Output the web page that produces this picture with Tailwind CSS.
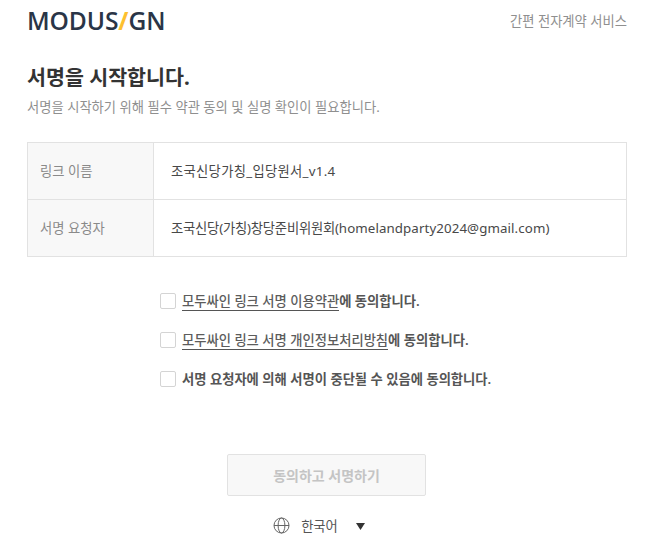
<!DOCTYPE html>
<html lang="ko">
<head>
    <meta charset="UTF-8">
    <title>모두싸인</title>
    <script src="https://cdn.jsdelivr.net/npm/@tailwindcss/browser@4"></script>
</head>
<body class="bg-white h-[535px] overflow-hidden font-['Noto_Sans','Noto_Sans_CJK_KR',sans-serif]">
    <div class="pl-[27px] pr-[38px]">
        <!-- Header -->
        <div class="flex items-center justify-between h-[44px]">
            <div class="text-[24.6px] leading-none font-semibold text-[#2a3547] tracking-[-0.1px] mb-[1px] font-['Open_Sans',sans-serif]">MODUS<span class="text-[#fdc02f] font-bold">/</span>GN</div>
            <div class="text-[13.3px] text-[#8f8f8f]">간편 전자계약 서비스</div>
        </div>

        <!-- Title -->
        <h1 class="mt-[20px] text-[20.6px] leading-[26px] font-bold text-[#333333]">서명을 시작합니다.</h1>
        <p class="mt-[8px] text-[13.3px] leading-[18px] text-[#8f8f8f]">서명을 시작하기 위해 필수 약관 동의 및 실명 확인이 필요합니다.</p>

        <!-- Info table -->
        <div class="mt-[26px] border border-[#e2e2e2] text-[13.3px]">
            <div class="flex h-[57px] border-b border-[#e2e2e2]">
                <div class="w-[126px] bg-[#f8f8f8] border-r border-[#e2e2e2] flex items-center pl-[12px] pt-[1px] text-[#8a8a8a]">링크 이름</div>
                <div class="flex-1 flex items-center pl-[17px] pt-[1px] text-[#484848] tracking-[0.3px]">조국신당가칭_입당원서_v1.4</div>
            </div>
            <div class="flex h-[56px]">
                <div class="w-[126px] bg-[#f8f8f8] border-r border-[#e2e2e2] flex items-center pl-[12px] pt-[1px] text-[#8a8a8a]">서명 요청자</div>
                <div class="flex-1 flex items-center pl-[17px] pt-[1px] text-[#484848]"><span class="tracking-[-0.2px]">조국신당(가칭)창당준비위원회(</span><span class="tracking-[0.1px]">homelandparty2024@gmail.com)</span></div>
            </div>
        </div>

        <!-- Agreements -->
        <div class="mt-[36px] ml-[133px] flex flex-col gap-[23px] text-[13.3px] leading-[16px] font-semibold text-[#555555]">
            <label class="flex items-center gap-[6px]">
                <span class="w-[16px] h-[16px] border border-[#d4d4d4] rounded-[2px] bg-white"></span>
                <span><span class="border-b border-[#555555] font-medium text-[#5c5c5c]">모두싸인 링크 서명 이용약관</span>에 동의합니다.</span>
            </label>
            <label class="flex items-center gap-[6px]">
                <span class="w-[16px] h-[16px] border border-[#d4d4d4] rounded-[2px] bg-white"></span>
                <span><span class="border-b border-[#555555] font-medium text-[#5c5c5c]">모두싸인 링크 서명 개인정보처리방침</span>에 동의합니다.</span>
            </label>
            <label class="flex items-center gap-[6px]">
                <span class="w-[16px] h-[16px] border border-[#d4d4d4] rounded-[2px] bg-white"></span>
                <span>서명 요청자에 의해 서명이 중단될 수 있음에 동의합니다.</span>
            </label>
        </div>

        <!-- Submit -->
        <div class="mt-[67px] flex justify-center">
            <button class="w-[199px] h-[42px] mr-[1px] bg-[#f8f8f8] border border-[#e2e2e2] rounded-[2px] text-[14px] font-bold text-[#c4c4c4]">동의하고 서명하기</button>
        </div>

        <!-- Language -->
        <div class="mt-[18px] pr-[16px] flex justify-center items-center text-[13.3px] text-[#555555] h-[24px]">
            <svg class="w-[17px] h-[17px] mb-[2px]" viewBox="0 0 17 17" fill="none" stroke="#666666" stroke-width="1">
                <circle cx="8.5" cy="8.5" r="7.5"/>
                <ellipse cx="8.5" cy="8.5" rx="3.4" ry="7.5"/>
                <path d="M1 8.5h15"/>
            </svg>
            <span class="ml-[11px] pt-[1px]">한국어</span>
            <svg class="ml-[18px] w-[9px] h-[7px]" viewBox="0 0 9 7" fill="#333333"><path d="M0 0h9L4.5 7z"/></svg>
        </div>
    </div>
</body>
</html>
